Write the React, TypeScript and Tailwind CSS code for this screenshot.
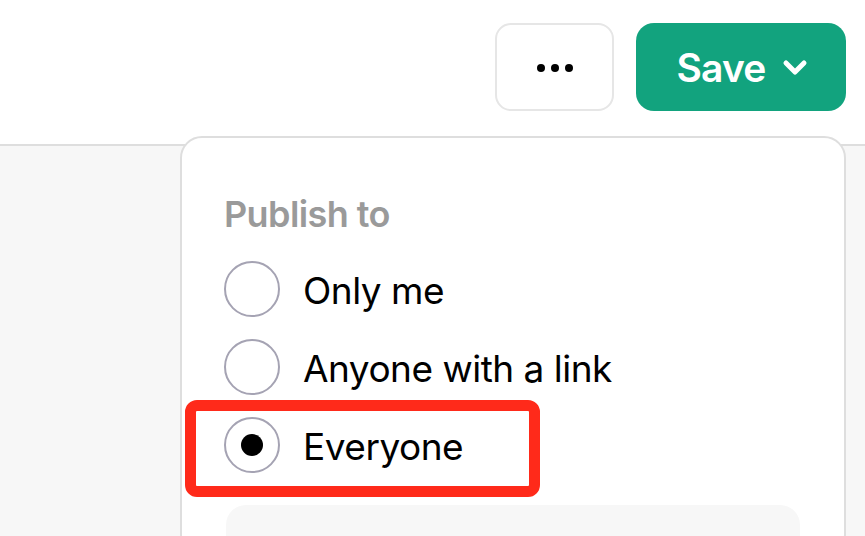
import { useState } from "react";

const options = ["Only me", "Anyone with a link", "Everyone"];

function Radio({ checked }: { checked: boolean }) {
  return (
    <span className="flex h-[56px] w-[56px] shrink-0 items-center justify-center rounded-full border-2 border-[#a5a3b3] bg-white">
      {checked && <span className="h-[22px] w-[22px] rounded-full bg-black" />}
    </span>
  );
}

export default function App() {
  const [selected, setSelected] = useState("Everyone");

  return (
    <div className="relative h-[536px] w-[865px] overflow-hidden bg-white font-['Inter',sans-serif]">
      {/* top bar */}
      <header className="flex h-[146px] items-start justify-end gap-[22px] border-b-2 border-[#dedede] bg-white pr-[19px] pt-[23px]">
        <button className="flex h-[88px] w-[119px] items-center justify-center gap-[6px] rounded-[16px] border-2 border-[#e6e6e6] bg-white pt-[2px]">
          <span className="h-[8px] w-[8px] rounded-full bg-black" />
          <span className="h-[8px] w-[8px] rounded-full bg-black" />
          <span className="h-[8px] w-[8px] rounded-full bg-black" />
        </button>
        <button className="flex h-[88px] w-[210px] items-center justify-center gap-[16px] rounded-[18px] bg-[#12a37e] pl-[2px] pt-[2px] text-[39px] font-semibold tracking-[-0.8px] text-white">
          Save
          <svg width="26" height="18" viewBox="0 0 26 18" fill="none">
            <path d="M4 4 L13 13 L22 4" stroke="white" strokeWidth="5" strokeLinecap="round" strokeLinejoin="round" />
          </svg>
        </button>
      </header>

      <main className="h-full bg-[#f7f7f7]" />

      {/* publish dropdown */}
      <div className="absolute left-[180px] top-[136px] h-[420px] w-[666px] rounded-[22px] border-2 border-[#dedede] bg-white pl-[42px] pr-[44px] pt-[54px]">
        <div className="text-[36px] font-semibold leading-[44px] tracking-[-0.6px] text-[#9a9a9a]">
          Publish to
        </div>
        <div className="mt-[25px] flex flex-col gap-[22px]">
          {options.map((o) => (
            <label key={o} className="flex h-[56px] cursor-pointer items-center gap-[23px]" onClick={() => setSelected(o)}>
              <Radio checked={selected === o} />
              <span className="pt-[2px] text-[37px] leading-none tracking-[-0.5px] text-black">{o}</span>
            </label>
          ))}
        </div>
        <div className="ml-[2px] mt-[32px] h-[120px] w-[574px] rounded-[20px] bg-[#f7f7f7]" />
      </div>

      {/* annotation */}
      <div className="pointer-events-none absolute left-[185px] top-[400px] h-[97px] w-[355px] rounded-[12px] border-[11px] border-[#ff2a1a]" />
    </div>
  );
}
